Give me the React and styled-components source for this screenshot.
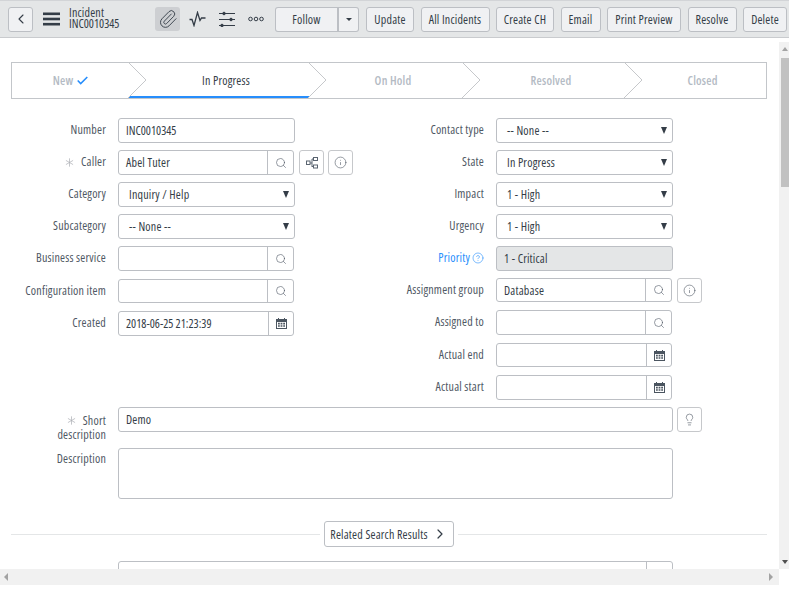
import React from 'react';
import styled, { createGlobalStyle } from 'styled-components';
import { ChevronLeft, ChevronRight, CircleHelp, Info, Lightbulb, Paperclip, Search, Asterisk } from 'lucide-react';

const GlobalStyle = createGlobalStyle`
  html, body { margin: 0; padding: 0; background: #fff; }
  body { font-family: "Open Sans", "Lato", sans-serif; font-stretch: 75%; font-size: 12px; letter-spacing: 0.2px; color: #343d47; }
`;

const actions = [
  { label: 'Update', width: 48 },
  { label: 'All Incidents', width: 69 },
  { label: 'Create CH', width: 58 },
  { label: 'Email', width: 40 },
  { label: 'Print Preview', width: 74 },
  { label: 'Resolve', width: 49 },
  { label: 'Delete', width: 44 },
];

const steps = [
  { label: 'New', width: 117, done: true },
  { label: 'In Progress', width: 180, active: true },
  { label: 'On Hold', width: 154 },
  { label: 'Resolved', width: 162 },
  { label: 'Closed', width: 141, last: true },
];

const PulseIcon = () => (
  <svg width="17" height="16" viewBox="0 0 17 16" fill="none" stroke="#343d47" strokeWidth="1.3">
    <path d="M0.5 8.5h2.5l2 6 3.5-13 2.5 8 1.5-2.5h4" />
  </svg>
);

const SlidersIcon = () => (
  <svg width="16" height="16" viewBox="0 0 16 16" fill="#343d47" stroke="#343d47" strokeWidth="1">
    <path d="M0 2.5h16M0 8.5h16M0 14.5h16" />
    <circle cx="5" cy="2.5" r="1.3" />
    <circle cx="12" cy="8.5" r="1.3" />
    <circle cx="3" cy="14.5" r="1.3" />
  </svg>
);

const DotsIcon = () => (
  <svg width="16" height="6" viewBox="0 0 16 6" fill="none" stroke="#343d47" strokeWidth="1">
    <circle cx="2.5" cy="3" r="1.8" />
    <circle cx="8" cy="3" r="1.8" />
    <circle cx="13.5" cy="3" r="1.8" />
  </svg>
);

const HamburgerIcon = () => (
  <svg width="17" height="14" viewBox="0 0 17 14" fill="#343d47">
    <rect y="0.5" width="17" height="2.6" />
    <rect y="5.7" width="17" height="2.6" />
    <rect y="10.9" width="17" height="2.6" />
  </svg>
);

const TreeIcon = () => (
  <svg width="12" height="12" viewBox="0 0 12 12" fill="none" stroke="#5a6470" strokeWidth="1">
    <rect x="0.5" y="4" width="3.5" height="3.5" />
    <rect x="7.5" y="0.5" width="4" height="3" />
    <rect x="7.5" y="8" width="4" height="3" />
    <path d="M4 6h2M6 2v8M6 2h1.5M6 9.5h1.5" />
  </svg>
);

const CalendarIcon = () => (
  <svg width="11" height="11" viewBox="0 0 11 11" fill="#4b5560">
    <path d="M0 1h2V0h1v1h5V0h1v1h2v10H0zm1 3V10h9V4z" />
    <path d="M2 4.8h1.8v1.6H2zM4.6 4.8h1.8v1.6H4.6zM7.2 4.8H9v1.6H7.2zM2 7.2h1.8v1.6H2zM4.6 7.2h1.8v1.6H4.6zM7.2 7.2H9v1.6H7.2z" />
  </svg>
);

const CheckIcon = () => (
  <svg width="11" height="9" viewBox="0 0 11 9" fill="none" stroke="#278efc" strokeWidth="1.6">
    <path d="M0.7 4.5l3 3L10.3 1" />
  </svg>
);

const ChevronMark = () => (
  <svg width="19" height="36" viewBox="0 0 19 36" fill="none" stroke="#c6c8cb" strokeWidth="1">
    <path d="M0 0l18 18L0 36" />
  </svg>
);

const Page = styled.div`
  width: 789px;
  height: 589px;
  overflow: hidden;
  display: flex;
  flex-direction: column;
  background: #fff;
`;

const Header = styled.header`
  height: 38px;
  flex: none;
  display: flex;
  align-items: center;
  padding: 0 2px 0 8px;
  background: #e4e6e7;
  border-top: 1px solid #d2d4d7;
  border-bottom: 1px solid #c9cbce;
  box-sizing: border-box;
`;

const HeaderButton = styled.button`
  height: 25px;
  width: ${(p) => p.$width}px;
  margin-right: ${(p) => p.$after ?? 6.5}px;
  flex: none;
  padding: 0;
  display: flex;
  align-items: center;
  justify-content: center;
  font: inherit;
  letter-spacing: inherit;
  white-space: nowrap;
  color: #343d47;
  background: #f0f1f3;
  border: 1px solid #bcbfc4;
  border-radius: 3px;
  box-sizing: border-box;
`;

const Burger = styled.div`
  margin: 0 9px 0 10px;
  display: flex;
`;

const Title = styled.div`
  width: 86px;
  flex: none;
  margin-top: -3px;
  line-height: 11px;
`;

const Code = styled.span`
  letter-spacing: 0;
`;

const IconSlot = styled.div`
  width: ${(p) => p.$width}px;
  height: 24px;
  flex: none;
  display: flex;
  align-items: center;
  justify-content: center;
  border-radius: 3px;
  background: ${(p) => (p.$on ? '#cdcfd2' : 'transparent')};
`;

const FollowGroup = styled.div`
  display: flex;
  margin: 0 7px 0 3px;
`;

const FollowButton = styled(HeaderButton)`
  margin: 0;
  border-radius: 3px 0 0 3px;
  border-right-width: 2px;
`;

const FollowCaret = styled(HeaderButton)`
  margin: 0;
  border-left: 0;
  border-radius: 0 3px 3px 0;
  &::after {
    content: '';
    border: 3px solid transparent;
    border-top: 3px solid #343d47;
    border-bottom: 0;
  }
`;

const Middle = styled.div`
  flex: 1;
  min-height: 0;
  display: flex;
`;

const Content = styled.main`
  width: 779px;
  flex: none;
  padding-top: 24px;
  box-sizing: border-box;
  overflow: hidden;
`;

const VTrack = styled.div`
  width: 10px;
  margin-top: 4px;
  padding-left: 2px;
  flex: none;
  position: relative;
  box-sizing: border-box;
  background: #f1f1f1;
`;

const VThumb = styled.div`
  margin-top: 16px;
  height: 129px;
  background: #c1c1c1;
`;

const ArrowUp = styled.div`
  position: absolute;
  top: 5px;
  left: 3px;
  border: 3.5px solid transparent;
  border-top: 0;
  border-bottom: 4px solid #a3a3a3;
`;

const ArrowDown = styled.div`
  position: absolute;
  bottom: 5px;
  left: 3px;
  border: 3.5px solid transparent;
  border-bottom: 0;
  border-top: 4px solid #505050;
`;

const HTrack = styled.div`
  width: 779px;
  height: 16px;
  flex: none;
  margin-bottom: 4px;
  display: flex;
  align-items: center;
  justify-content: space-between;
  padding: 0 6px 0 4px;
  box-sizing: border-box;
  background: #f1f1f1;
`;

const ArrowLeft = styled.div`
  border: 4px solid transparent;
  border-left: 0;
  border-right: 4px solid #a3a3a3;
`;

const ArrowRight = styled.div`
  border: 4px solid transparent;
  border-right: 0;
  border-left: 4px solid #a3a3a3;
`;

const Stepper = styled.div`
  width: 756px;
  height: 37px;
  margin-left: 11px;
  display: flex;
  box-sizing: border-box;
  border: 1px solid #c3c6ca;
`;

const Step = styled.div`
  position: relative;
  width: ${(p) => p.$width}px;
  flex: none;
  display: flex;
  align-items: center;
  justify-content: center;
  gap: 4px;
  font-weight: ${(p) => (p.$active ? 400 : 600)};
  color: ${(p) => (p.$active ? '#343d47' : '#b4bbc4')};
  box-shadow: ${(p) => (p.$active ? 'inset 0 -2px 0 #278efc' : 'none')};
  padding-left: ${(p) => (p.$done ? 0 : 14)}px;
  box-sizing: border-box;
`;

const StepChevron = styled.div`
  position: absolute;
  top: -1px;
  right: -18px;
  z-index: 1;
  display: flex;
`;

const FormColumns = styled.div`
  display: flex;
  margin-top: 19px;
`;

const Column = styled.div`
  width: ${(p) => p.$width}px;
  flex: none;
  display: flex;
  flex-direction: column;
`;

const Row = styled.div`
  display: flex;
  align-items: ${(p) => (p.$top ? 'flex-start' : 'center')};
  height: ${(p) => p.$height ?? 25}px;
  margin-bottom: ${(p) => p.$after ?? 7}px;
`;

const Label = styled.div`
  width: 106px;
  flex: none;
  margin-right: 12px;
  margin-top: ${(p) => p.$top ?? -1}px;
  text-align: right;
  line-height: 14px;
  color: #4f5864;
`;

const LabelLine = styled.div`
  display: flex;
  align-items: center;
  justify-content: flex-end;
  gap: ${(p) => p.$gap ?? 4}px;
`;

const Required = styled(Asterisk)`
  color: #b0b3b8;
`;

const LinkLabel = styled.span`
  color: #278efc;
`;

const HelpMark = styled(CircleHelp)`
  color: #278efc;
`;

const Field = styled.div`
  width: ${(p) => p.$width}px;
  height: ${(p) => p.$height ?? 25}px;
  flex: none;
  display: flex;
  align-items: center;
  padding-left: ${(p) => p.$pad ?? 7}px;
  box-sizing: border-box;
  position: relative;
  color: #343d47;
  background: ${(p) => (p.$readonly ? '#e4e6e7' : '#fff')};
  border: 1px solid #bcbfc4;
  border-radius: 3px;
`;

const SelectField = styled(Field)`
  padding-left: 10px;
  &::after {
    content: '';
    position: absolute;
    right: 5px;
    top: 8px;
    border: 3.5px solid transparent;
    border-top: 7px solid #343d47;
    border-bottom: 0;
  }
`;

const Group = styled.div`
  width: ${(p) => p.$width}px;
  height: ${(p) => p.$height ?? 25}px;
  flex: none;
  display: flex;
  box-sizing: border-box;
  border: 1px solid #bcbfc4;
  border-radius: 3px;
  overflow: hidden;
`;

const GroupText = styled.div`
  flex: 1;
  display: flex;
  align-items: center;
  padding-left: 7px;
  color: #343d47;
`;

const GroupAddon = styled.div`
  width: ${(p) => p.$width ?? 26}px;
  flex: none;
  display: flex;
  align-items: center;
  justify-content: center;
  border-left: 1px solid #bcbfc4;
  box-sizing: border-box;
  color: #4f5864;
`;

const SideButton = styled.div`
  width: 25px;
  height: 25px;
  margin-left: ${(p) => p.$before ?? 4}px;
  flex: none;
  display: flex;
  align-items: center;
  justify-content: center;
  box-sizing: border-box;
  border: 1px solid #c6c8cb;
  border-radius: 3px;
  color: #4f5864;
`;

const Divider = styled.div`
  display: flex;
  align-items: center;
  width: 756px;
  margin: 22px 0 14px 11px;
  &::before, &::after {
    content: '';
    flex: 1;
    height: 1px;
    background: #e4e6e7;
  }
`;

const RelatedButton = styled.div`
  width: 130px;
  height: 26px;
  margin: 0 4px;
  flex: none;
  display: flex;
  align-items: center;
  justify-content: center;
  gap: 4px;
  white-space: nowrap;
  box-sizing: border-box;
  border: 1px solid #bcbfc4;
  border-radius: 3px;
  color: #343d47;
`;

const Cut = styled.div`
  margin-left: 118px;
`;

const SearchGroup = ({ width = 176, height, value }) => (
  <Group $width={width} $height={height}>
    <GroupText>{value}</GroupText>
    <GroupAddon>
      <Search size={12} strokeWidth={1.2} />
    </GroupAddon>
  </Group>
);

const DateGroup = ({ width = 176, height, value }) => (
  <Group $width={width} $height={height}>
    <GroupText>{value}</GroupText>
    <GroupAddon $width={25}>
      <CalendarIcon />
    </GroupAddon>
  </Group>
);

const App = () => {
  return (
    <Page>
      <GlobalStyle />
      <Header>
        <HeaderButton $width={25} $after={0}>
          <ChevronLeft size={16} strokeWidth={1.6} />
        </HeaderButton>
        <Burger><HamburgerIcon /></Burger>
        <Title>
          <div>Incident</div>
          <div><Code>INC0010345</Code></div>
        </Title>
        <IconSlot $width={25} $on><Paperclip size={20} strokeWidth={1.1} /></IconSlot>
        <IconSlot $width={34}><PulseIcon /></IconSlot>
        <IconSlot $width={26}><SlidersIcon /></IconSlot>
        <IconSlot $width={32}><DotsIcon /></IconSlot>
        <FollowGroup>
          <FollowButton $width={64}>Follow</FollowButton>
          <FollowCaret $width={20} />
        </FollowGroup>
        {actions.map((action) => (
          <HeaderButton key={action.label} $width={action.width}>{action.label}</HeaderButton>
        ))}
      </Header>

      <Middle>
        <Content>
          <Stepper>
            {steps.map((step) => (
              <Step key={step.label} $width={step.width} $active={step.active} $done={step.done}>
                {step.label}
                {step.done && <CheckIcon />}
                {!step.last && <StepChevron><ChevronMark /></StepChevron>}
              </Step>
            ))}
          </Stepper>

          <FormColumns>
            <Column $width={378}>
              <Row>
                <Label>Number</Label>
                <Field $width={177}><Code>INC0010345</Code></Field>
              </Row>
              <Row>
                <Label>
                  <LabelLine><Required size={15} strokeWidth={1.2} />Caller</LabelLine>
                </Label>
                <SearchGroup value="Abel Tuter" />
                <SideButton $before={5}><TreeIcon /></SideButton>
                <SideButton><Info size={13} strokeWidth={1.1} /></SideButton>
              </Row>
              <Row>
                <Label>Category</Label>
                <SelectField $width={177}>Inquiry / Help</SelectField>
              </Row>
              <Row>
                <Label>Subcategory</Label>
                <SelectField $width={177}>-- None --</SelectField>
              </Row>
              <Row $after={8}>
                <Label>Business service</Label>
                <SearchGroup />
              </Row>
              <Row $height={24} $after={8}>
                <Label>Configuration item</Label>
                <SearchGroup height={24} />
              </Row>
              <Row>
                <Label>Created</Label>
                <DateGroup value={<Code>2018-06-25 21:23:39</Code>} />
              </Row>
            </Column>

            <Column $width={340}>
              <Row>
                <Label>Contact type</Label>
                <SelectField $width={177}>-- None --</SelectField>
              </Row>
              <Row>
                <Label>State</Label>
                <SelectField $width={177}>In Progress</SelectField>
              </Row>
              <Row>
                <Label>Impact</Label>
                <SelectField $width={177}>1 - High</SelectField>
              </Row>
              <Row>
                <Label>Urgency</Label>
                <SelectField $width={177}>1 - High</SelectField>
              </Row>
              <Row>
                <Label>
                  <LabelLine $gap={2}>
                    <LinkLabel>Priority</LinkLabel>
                    <HelpMark size={12} strokeWidth={1.2} />
                  </LabelLine>
                </Label>
                <Field $width={177} $readonly>1 - Critical</Field>
              </Row>
              <Row $height={24} $after={8}>
                <Label>Assignment group</Label>
                <SearchGroup height={24} value="Database" />
                <SideButton $before={5}><Info size={13} strokeWidth={1.1} /></SideButton>
              </Row>
              <Row $after={8}>
                <Label>Assigned to</Label>
                <SearchGroup />
              </Row>
              <Row $height={24} $after={8}>
                <Label>Actual end</Label>
                <DateGroup height={24} />
              </Row>
              <Row>
                <Label>Actual start</Label>
                <DateGroup />
              </Row>
            </Column>
          </FormColumns>

          <Column $width={756}>
            <Row $top $after={16}>
              <Label $top={6}>
                <LabelLine><Required size={15} strokeWidth={1.2} />Short</LabelLine>
                description
              </Label>
              <Field $width={555}>Demo</Field>
              <SideButton><Lightbulb size={13} strokeWidth={1.1} /></SideButton>
            </Row>
            <Row $top $height={51} $after={0}>
              <Label $top={4}>Description</Label>
              <Field $width={555} $height={51} />
            </Row>
          </Column>

          <Divider>
            <RelatedButton>
              Related Search Results
              <ChevronRight size={16} strokeWidth={1.8} />
            </RelatedButton>
          </Divider>

          <Cut><SearchGroup width={555} height={40} /></Cut>
        </Content>
        <VTrack>
          <ArrowUp />
          <VThumb />
          <ArrowDown />
        </VTrack>
      </Middle>
      <HTrack>
        <ArrowLeft />
        <ArrowRight />
      </HTrack>
    </Page>
  );
};

export default App;
